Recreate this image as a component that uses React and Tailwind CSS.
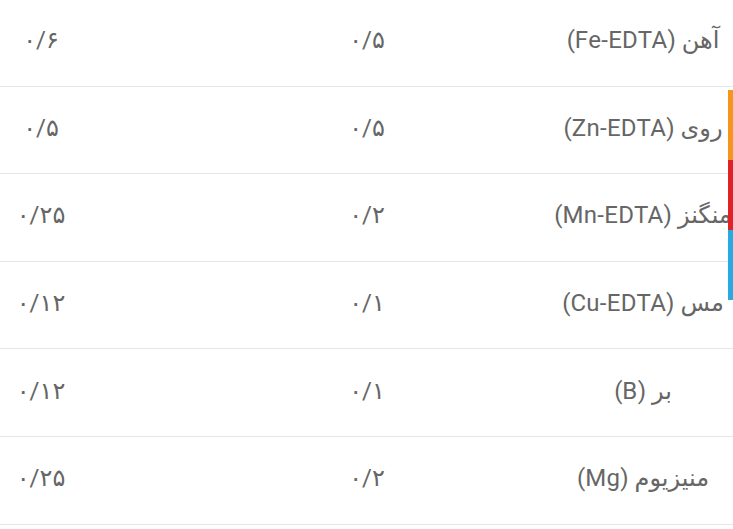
import React from "react";

const rows = [
  ["آهن (Fe-EDTA)", "۰/۵", "۰/۶"],
  ["روی (Zn-EDTA)", "۰/۵", "۰/۵"],
  ["منگنز (Mn-EDTA)", "۰/۲", "۰/۲۵"],
  ["مس (Cu-EDTA)", "۰/۱", "۰/۱۲"],
  ["بر (B)", "۰/۱", "۰/۱۲"],
  ["منیزیوم (Mg)", "۰/۲", "۰/۲۵"],
];

export default function App() {
  return (
    <div
      className="relative w-[733px] h-[529px] overflow-hidden bg-white text-[#666666] text-[24px] tracking-[0.3px]"
      style={{ fontFamily: "Roboto, 'Noto Sans', 'DejaVu Sans', sans-serif" }}
    >
      <div className="-mt-[1px]">
        {rows.map((r, i) => (
          <div
            key={i}
            className="flex items-center h-[87.6px] pb-[4px] border-b border-[#e6e6e6] box-border"
          >
            <div className="w-[82px] shrink-0 text-center" dir="rtl">{r[2]}</div>
            <div className="w-[470px] shrink-0 pl-[100px] text-center" dir="rtl">{r[1]}</div>
            <div className="w-[182px] shrink-0 flex justify-center" dir="rtl">
              <span className="whitespace-nowrap">{r[0]}</span>
            </div>
          </div>
        ))}
      </div>
      <div className="absolute right-0 top-[90px] w-[5px] flex flex-col">
        <div className="h-[70px] bg-[#f7941d]" />
        <div className="h-[70px] bg-[#e02127]" />
        <div className="h-[70px] bg-[#27aae1]" />
      </div>
    </div>
  );
}
